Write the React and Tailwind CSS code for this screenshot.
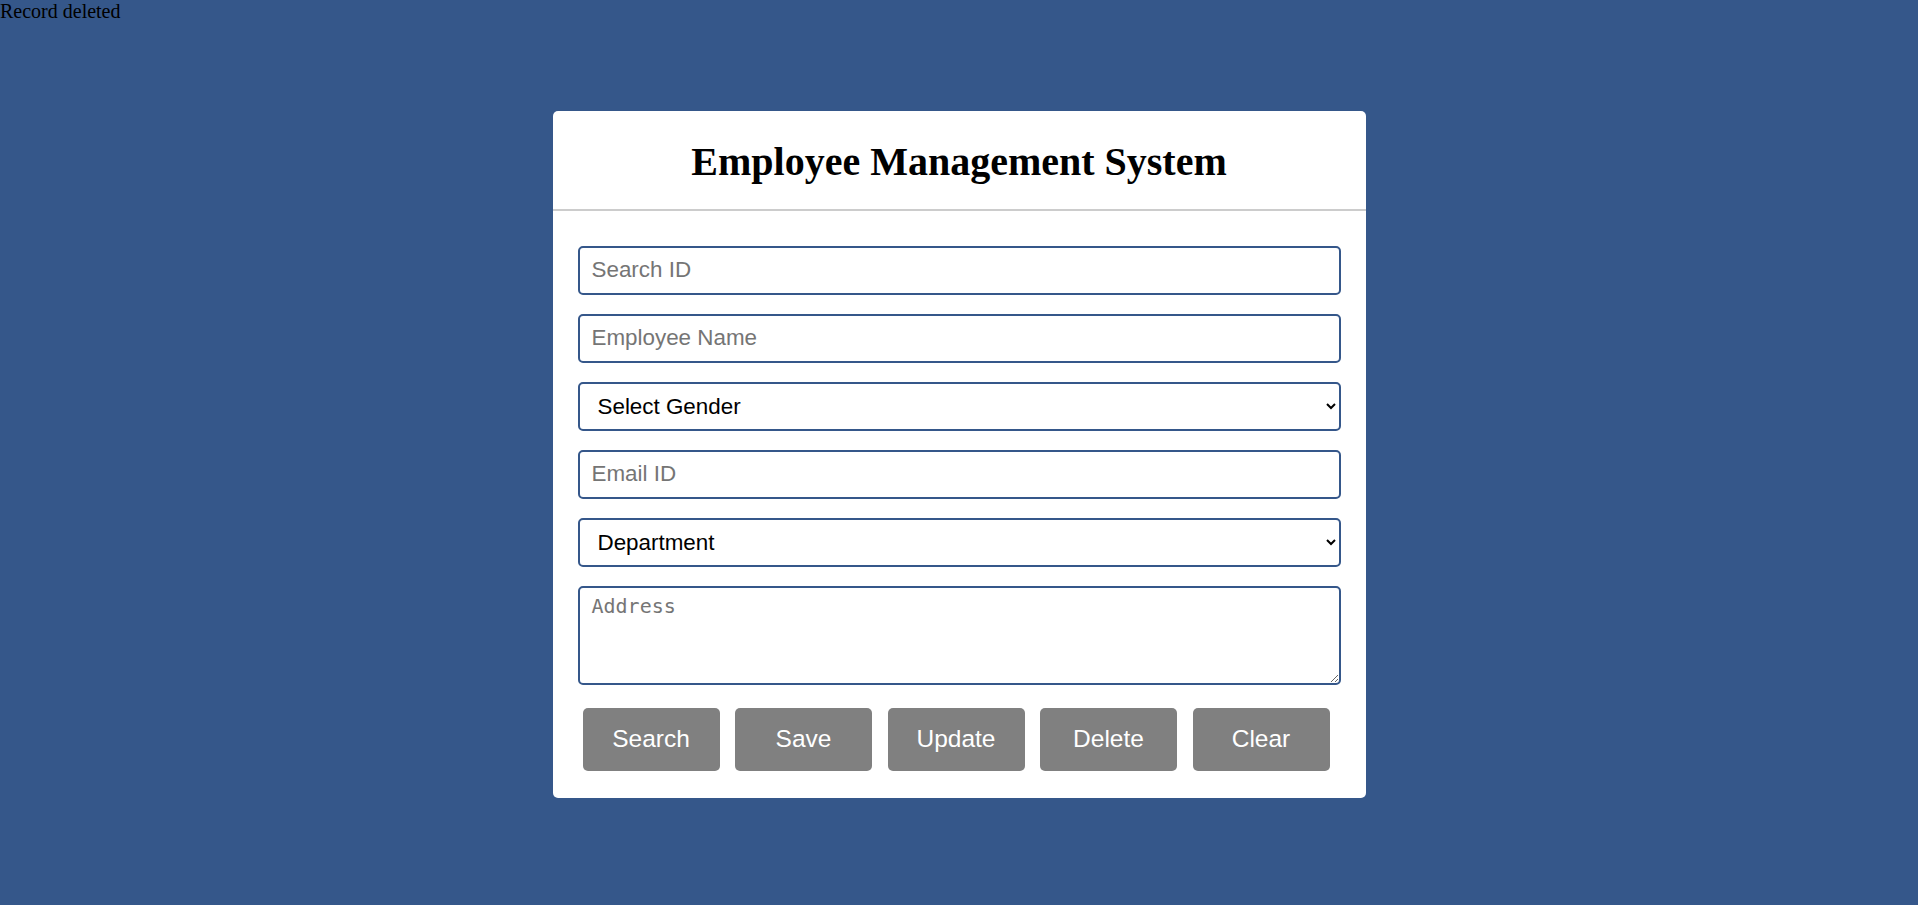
import React, { useState } from 'react';

const fieldCls =
  "box-border w-full h-[48.5px] rounded-[5px] border-2 border-[#35578a] bg-white px-[12px] text-[22.4px] text-black outline-none placeholder:text-[#757575]";

const App = () => {
  const [form, setForm] = useState({ id: '', name: '', gender: '', email: '', dept: '', address: '' });
  const set = (k) => (e) => setForm({ ...form, [k]: e.target.value });

  return (
    <div className="min-h-[905px] bg-[#35578a]" style={{ fontFamily: '"Liberation Serif", serif' }}>
      <div className="h-[23px] text-[20px] leading-[23px] text-black">Record deleted</div>
      <div className="mx-auto mt-[88px] w-[813px] rounded-[5px] bg-white">
        <div className="flex h-[100px] items-center justify-center border-b-2 border-[#cccccc] pt-[3px]">
          <h1 className="text-[40px] font-bold text-black" style={{ fontFamily: '"Liberation Serif", serif' }}>
            Employee Management System
          </h1>
        </div>
        <div className="flex flex-col gap-[19.5px] px-[25px] pt-[35px] pb-[27px]" style={{ fontFamily: '"Liberation Sans", Arial, sans-serif' }}>
          <input className={fieldCls} placeholder="Search ID" value={form.id} onChange={set('id')} />
          <input className={fieldCls} placeholder="Employee Name" value={form.name} onChange={set('name')} />
          <select className={`${fieldCls} pl-[14px]`} value={form.gender} onChange={set('gender')}>
            <option value="">Select Gender</option>
            <option>Male</option>
            <option>Female</option>
          </select>
          <input className={fieldCls} placeholder="Email ID" value={form.email} onChange={set('email')} />
          <select className={`${fieldCls} pl-[14px]`} value={form.dept} onChange={set('dept')}>
            <option value="">Department</option>
            <option>HR</option>
            <option>IT</option>
            <option>Finance</option>
          </select>
          <textarea
            className="box-border h-[98.5px] w-full rounded-[5px] border-2 border-[#35578a] px-[12px] py-[3px] text-[20px] text-black outline-none placeholder:text-[#757575]"
            style={{ fontFamily: '"DejaVu Sans Mono", monospace' }}
            placeholder="Address"
            value={form.address}
            onChange={set('address')}
          />
          <div className="mt-[4px] flex gap-[15.5px] pl-[5px]">
            {['Search', 'Save', 'Update', 'Delete', 'Clear'].map((b) => (
              <button
                key={b}
                type="button"
                className="h-[63px] w-[137px] rounded-[5px] bg-[#808080] text-[24.5px] text-white"
              >
                {b}
              </button>
            ))}
          </div>
        </div>
      </div>
    </div>
  );
};

export default App;
